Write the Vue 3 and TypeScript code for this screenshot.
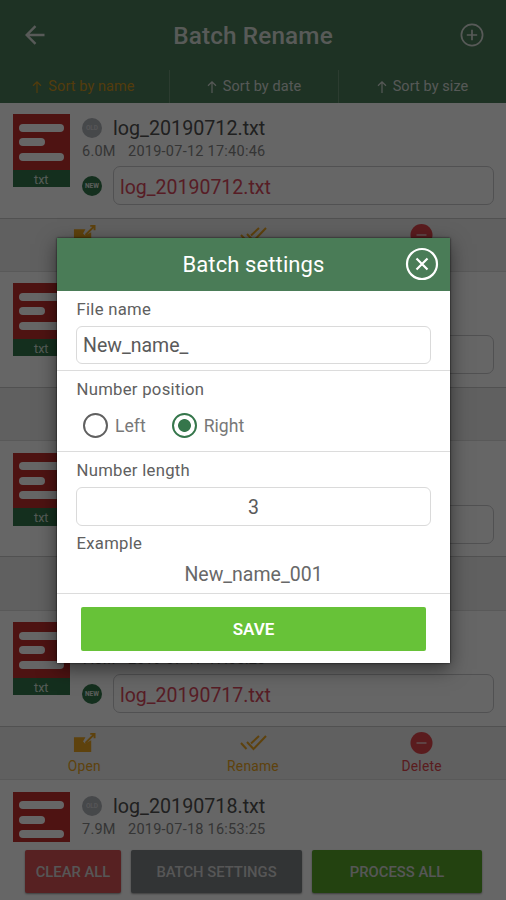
<script setup lang="ts">
import { ref, computed } from 'vue'

interface LogFile {
  name: string
  size: string
  date: string
}

const files: LogFile[] = [
  { name: 'log_20190712.txt', size: '6.0M', date: '2019-07-12 17:40:46' },
  { name: 'log_20190715.txt', size: '6.4M', date: '2019-07-15 17:12:30' },
  { name: 'log_20190716.txt', size: '7.1M', date: '2019-07-16 17:33:08' },
  { name: 'log_20190717.txt', size: '7.3M', date: '2019-07-17 17:05:26' },
  { name: 'log_20190718.txt', size: '7.9M', date: '2019-07-18 16:53:25' },
]

const tabs = ['Sort by name', 'Sort by date', 'Sort by size']
const activeTab = ref(0)
const baseName = ref('New_name_')
const numberLength = ref('3')
const position = ref<'Left' | 'Right'>('Right')
const positions: Array<'Left' | 'Right'> = ['Left', 'Right']

const example = computed(() => {
  const n = '1'.padStart(Number(numberLength.value) || 1, '0')
  return position.value === 'Right' ? baseName.value + n : n + baseName.value
})
</script>

<template>
  <div class="screen">
    <header class="bar">
      <svg class="back" viewBox="0 0 20 20"><path d="M19.500 10H2M10.500 1.200L1.700 10l8.800 8.800" /></svg>
      <h1>Batch Rename</h1>
      <svg class="add" viewBox="0 0 24 24"><circle cx="12" cy="12" r="10.600" /><path d="M12 6.800v10.400M6.800 12h10.400" /></svg>
    </header>
    <nav class="tabs">
      <div v-for="(tab, i) in tabs" :key="tab" class="tab" :class="{ active: i === activeTab }" @click="activeTab = i">
        <svg viewBox="0 0 10 12"><path d="M5 12V1M1 4.800L5 .9l4 3.900" /></svg>
        <span>{{ tab }}</span>
      </div>
    </nav>

    <main class="list">
      <article v-for="file in files" :key="file.name" class="card">
        <div class="info">
          <div class="thumb">
            <div class="sheet"><i></i><i class="short"></i><i></i></div>
            <div class="ext">txt</div>
          </div>
          <div class="details">
            <div class="row"><span class="badge old">OLD</span><span class="name">{{ file.name }}</span></div>
            <div class="meta"><span class="size">{{ file.size }}</span><span>{{ file.date }}</span></div>
            <div class="row target"><span class="badge">NEW</span><div class="field">{{ file.name }}</div></div>
          </div>
        </div>
        <div class="actions">
          <div class="action">
            <svg viewBox="0 0 24 22"><path class="fill" d="M1 5h12l-2.500 4.500 2 2L19 8v12.500H1z" /><path d="M13 11l9-9M18 1.500h4.500V6" /></svg>
            <span>Open</span>
          </div>
          <div class="action">
            <svg class="checks" viewBox="0 0 28 22"><path d="M2 11l5.500 6M8 10l6.500 7L27 4M12 11.500L20 4" /></svg>
            <span>Rename</span>
          </div>
          <div class="action delete">
            <svg viewBox="0 0 22 22"><circle class="fill" cx="11" cy="11" r="11" /><path class="minus" d="M6 11h10" /></svg>
            <span>Delete</span>
          </div>
        </div>
      </article>
    </main>

    <footer class="footer">
      <button class="btn red">CLEAR ALL</button>
      <button class="btn grey">BATCH SETTINGS</button>
      <button class="btn green">PROCESS ALL</button>
    </footer>

    <div class="backdrop">
      <section class="dialog">
        <div class="dialog-head">
          <h2>Batch settings</h2>
          <svg class="close" viewBox="0 0 34 34"><circle cx="17" cy="17" r="15" /><path d="M11.500 11.500l11 11M22.500 11.500l-11 11" /></svg>
        </div>
        <div class="block file">
          <label>File name</label>
          <input v-model="baseName" type="text" />
        </div>
        <div class="block pos">
          <label>Number position</label>
          <div class="radios">
            <div v-for="p in positions" :key="p" class="radio" :class="{ on: p === position }" @click="position = p">
              <span class="ring"></span><span class="radio-text">{{ p }}</span>
            </div>
          </div>
        </div>
        <div class="block len">
          <label>Number length</label>
          <input v-model="numberLength" class="center" type="text" />
          <label class="example-label">Example</label>
          <div class="example">{{ example }}</div>
        </div>
        <div class="save-row"><button class="save">SAVE</button></div>
      </section>
    </div>
  </div>
</template>

<style>
body {
  margin: 0;
  overflow: hidden;
}
</style>

<style scoped>
* {
  box-sizing: border-box;
}
.screen {
  position: relative;
  width: 506px;
  height: 900px;
  display: flex;
  flex-direction: column;
  overflow: hidden;
  background: #fff;
  font-family: Roboto, "Liberation Sans", sans-serif;
  white-space: nowrap;
}
svg {
  display: block;
  flex: none;
  fill: none;
  stroke: currentColor;
}
h1,
h2 {
  margin: 0;
}
button {
  border: 0;
  padding: 0;
  font-family: inherit;
  color: #fff;
}
.bar {
  flex: none;
  height: 69px;
  padding: 0 22px 0 25px;
  display: flex;
  align-items: center;
  justify-content: space-between;
  background: #4b7d5b;
  color: #dce2dd;
}
.bar h1 {
  font-size: 24.3px;
  font-weight: 500;
  letter-spacing: 0.15px;
  line-height: 30px;
  padding: 2px 0 0 1px;
}
.back {
  width: 20px;
  height: 20px;
  stroke-width: 2.4;
}
.add {
  width: 24px;
  height: 24px;
  stroke-width: 1.7;
}
.tabs {
  flex: none;
  height: 33.5px;
  padding-top: 1px;
  display: flex;
  background: #4b7d5b;
  color: #d8ded9;
}
.tab {
  width: 169px;
  display: flex;
  align-items: center;
  justify-content: center;
  gap: 6px;
  padding-top: 1px;
  font-size: 14.5px;
  letter-spacing: 0.08px;
  border-right: 1px solid #6e9679;
}
.tab:first-child {
  width: 170px;
  padding-right: 2px;
}
.tab:last-child {
  width: 167px;
  border-right: 0;
}
.tab svg {
  width: 10px;
  height: 12px;
  stroke-width: 1.2;
}
.tab.active {
  color: #cf961f;
}
.list {
  flex: 1;
  min-height: 0;
  overflow: hidden;
}
.card {
  height: 169.4px;
}
.info {
  height: 115px;
  padding: 11.5px 12px 0 13px;
  display: flex;
  gap: 12.5px;
}
.thumb {
  flex: none;
  width: 56.5px;
}
.sheet {
  height: 55.5px;
  padding: 9.5px 6px 0;
  display: flex;
  flex-direction: column;
  gap: 6.5px;
  background: #c4302f;
}
.sheet i {
  height: 8px;
  border-radius: 4px;
  background: #fff;
}
.sheet .short {
  width: 26px;
}
.ext {
  height: 17.5px;
  background: #34764c;
  color: #d4e2d9;
  font-size: 12.5px;
  line-height: 20px;
  text-align: center;
}
.details {
  flex: 1;
}
.row {
  display: flex;
  align-items: center;
}
.badge {
  flex: none;
  width: 20px;
  height: 20px;
  margin-right: 11px;
  border-radius: 50%;
  background: #34764c;
  color: #e4ece6;
  font-size: 6.5px;
  font-weight: 700;
  line-height: 20px;
  text-align: center;
}
.badge.old {
  background: #b0b3b9;
  color: #d6d6da;
}
.name {
  font-size: 19.7px;
  line-height: 26px;
  color: #505050;
  padding-top: 2px;
}
.meta {
  height: 24px;
  font-size: 14.5px;
  line-height: 20px;
  letter-spacing: 0.25px;
  color: #858585;
}
.size {
  display: inline-block;
  width: 46px;
}
.field {
  flex: 1;
  height: 39px;
  padding-left: 6px;
  border: 1px solid #cbcbcd;
  border-radius: 7px;
  font-size: 19.5px;
  line-height: 41px;
  color: #d94a5c;
}
.actions {
  height: 54.4px;
  display: flex;
  background: #efefef;
  border-top: 1.5px solid #cacaca;
  border-bottom: 1px solid #dedede;
}
.action {
  flex: 1;
  display: flex;
  flex-direction: column;
  align-items: center;
  padding-top: 5px;
  color: #eba522;
  font-size: 13.8px;
}
.action svg {
  width: 23px;
  height: 22px;
  stroke-width: 2;
}
.action .checks {
  width: 28px;
}
.action span {
  line-height: 18px;
  margin-top: 3px;
  letter-spacing: 0.25px;
}
.fill {
  fill: currentColor;
  stroke: none;
}
.action .minus {
  stroke: #eda9aa;
}
.delete {
  color: #e0474d;
}
.footer {
  flex: none;
  height: 58px;
  padding: 8px 24px 7px 25px;
  display: flex;
  gap: 10px;
  background: #fff;
}
.btn {
  border-radius: 2px;
  padding-top: 1px;
  font-size: 14.8px;
  font-weight: 500;
  color: #d8d8d8;
  box-shadow: 0 1px 2px #999;
}
.red {
  width: 96px;
  background: #d95355;
}
.grey {
  width: 171px;
  background: #7d8286;
}
.green {
  width: 170px;
  background: #57a52a;
}
.backdrop {
  position: absolute;
  inset: 0;
  padding: 237.5px 56px 0 57px;
  background: rgba(0, 0, 0, 0.6);
}
.dialog {
  height: 425.5px;
  background: #fff;
  color: #606060;
  box-shadow: 0 6px 18px rgba(0, 0, 0, 0.5), 0 0 2px rgba(0, 0, 0, 0.8);
}
.dialog-head {
  position: relative;
  height: 53px;
  display: flex;
  align-items: center;
  justify-content: center;
  background: #4a7c57;
  color: #fff;
}
.dialog-head h2 {
  font-size: 22px;
  font-weight: 400;
  letter-spacing: 0.1px;
  padding-top: 1px;
}
.close {
  position: absolute;
  right: 11.5px;
  top: 9.5px;
  width: 34px;
  height: 34px;
  stroke-width: 2.2;
}
.block {
  padding: 0 19px;
  border-bottom: 1.5px solid #dcdcdc;
}
label {
  display: block;
  font-size: 16.7px;
  letter-spacing: 0.28px;
  line-height: 22px;
  padding-left: 0.5px;
}
input {
  display: block;
  width: 100%;
  height: 38px;
  padding: 2px 6px 0;
  border: 1.5px solid #dadada;
  border-radius: 6px;
  outline: 0;
  background: #fff;
  font-family: inherit;
  font-size: 19.5px;
  color: #5a5a5a;
}
.center {
  text-align: center;
}
.file {
  height: 80.5px;
  padding-top: 8px;
}
.file input {
  margin-top: 5px;
}
.pos {
  height: 80.5px;
  padding-top: 8px;
}
.radios {
  display: flex;
  gap: 26px;
  padding: 12px 0 0 7px;
}
.radio {
  display: flex;
  align-items: center;
  gap: 7px;
  font-size: 17.6px;
  line-height: 24px;
  color: #787878;
}
.ring {
  width: 25px;
  height: 25px;
  border: 2px solid #606060;
  border-radius: 50%;
}
.on .ring {
  border-color: #35764b;
  background: radial-gradient(circle, #35764b 6px, transparent 6.8px);
}
.len {
  height: 142.5px;
  padding-top: 8px;
}
.len input {
  height: 39px;
  margin-top: 5px;
}
.example-label {
  margin-top: 7px;
}
.example {
  font-size: 19.5px;
  line-height: 24px;
  margin-top: 8px;
  text-align: center;
  color: #686868;
}
.save-row {
  padding: 12.5px 24px 0;
}
.save {
  display: block;
  width: 100%;
  height: 44px;
  padding-top: 1px;
  border-radius: 2px;
  background: #67c238;
  font-size: 17px;
  font-weight: 600;
}
</style>
